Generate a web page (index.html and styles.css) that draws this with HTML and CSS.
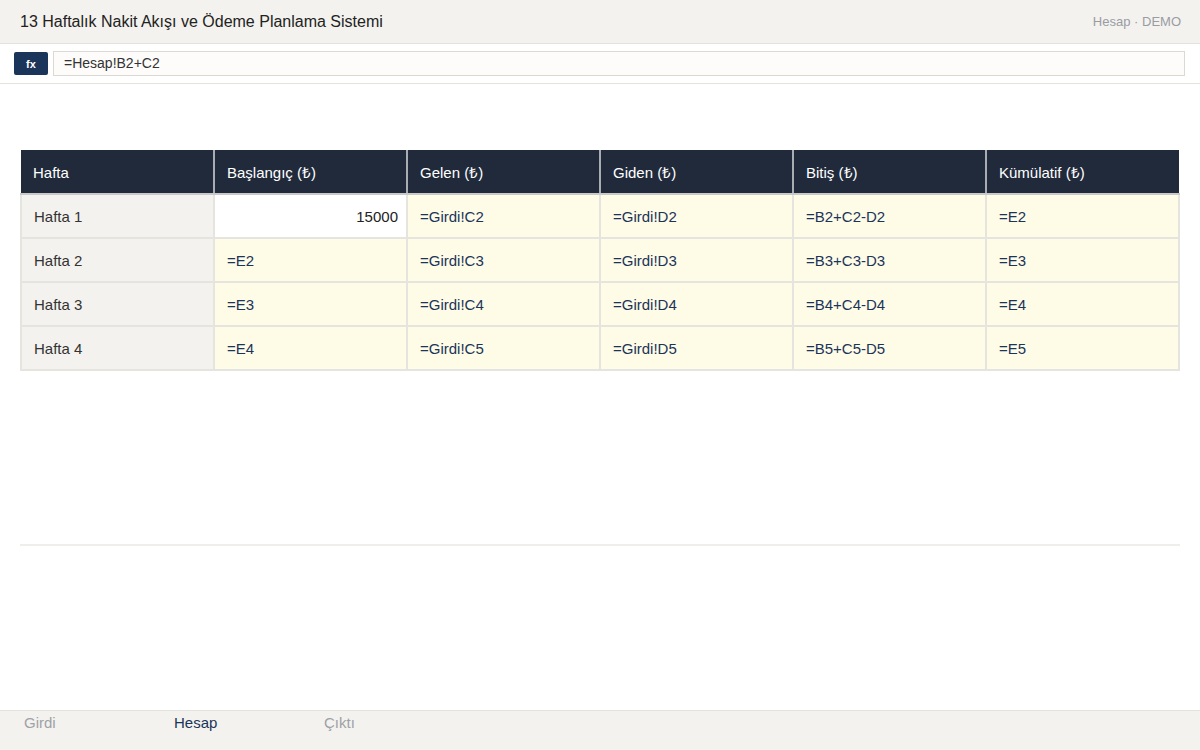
FILE: index.html
```html
<!DOCTYPE html>
<html lang="tr">

<head>
    <meta charset="UTF-8">
    <meta name="viewport" content="width=device-width, initial-scale=1.0">
    <title>13 Haftalık Nakit Akışı ve Ödeme Planlama Sistemi</title>
    <link rel="stylesheet" href="styles.css">
</head>

<body>
    <div class="app">
        <!-- üst başlık -->
        <div class="topbar">
            <div class="title">13 Haftalık Nakit Akışı ve Ödeme Planlama Sistemi</div>
            <div class="meta">Hesap · DEMO</div>
        </div>
        <!-- formül çubuğu -->
        <div class="formula">
            <span class="fx">fx</span>
            <div class="formula-input">=Hesap!B2+C2</div>
        </div>

        <div class="sheet">
            <table class="grid">
                <thead>
                    <tr>
                        <th>Hafta</th>
                        <th>Başlangıç (₺)</th>
                        <th>Gelen (₺)</th>
                        <th>Giden (₺)</th>
                        <th>Bitiş (₺)</th>
                        <th>Kümülatif (₺)</th>
                    </tr>
                </thead>
                <tbody>
                    <tr>
                        <td class="label">Hafta 1</td>
                        <td class="value">15000</td>
                        <td class="calc">=Girdi!C2</td>
                        <td class="calc">=Girdi!D2</td>
                        <td class="calc">=B2+C2-D2</td>
                        <td class="calc">=E2</td>
                    </tr>
                    <tr>
                        <td class="label">Hafta 2</td>
                        <td class="calc">=E2</td>
                        <td class="calc">=Girdi!C3</td>
                        <td class="calc">=Girdi!D3</td>
                        <td class="calc">=B3+C3-D3</td>
                        <td class="calc">=E3</td>
                    </tr>
                    <tr>
                        <td class="label">Hafta 3</td>
                        <td class="calc">=E3</td>
                        <td class="calc">=Girdi!C4</td>
                        <td class="calc">=Girdi!D4</td>
                        <td class="calc">=B4+C4-D4</td>
                        <td class="calc">=E4</td>
                    </tr>
                    <tr>
                        <td class="label">Hafta 4</td>
                        <td class="calc">=E4</td>
                        <td class="calc">=Girdi!C5</td>
                        <td class="calc">=Girdi!D5</td>
                        <td class="calc">=B5+C5-D5</td>
                        <td class="calc">=E5</td>
                    </tr>
                </tbody>
            </table>
            <div class="divider"></div>
        </div>

        <!-- sayfa sekmeleri -->
        <div class="tabs">
            <span class="tab">Girdi</span>
            <span class="tab active">Hesap</span>
            <span class="tab">Çıktı</span>
        </div>
    </div>
</body>

</html>
```

FILE: styles.css
```css
* {
    box-sizing: border-box;
}

body {
    margin: 0;
    font-family: "Liberation Sans", Arial, sans-serif;
    color: #222;
    background: #fff;
}

.app {
    width: 1200px;
    height: 750px;
    display: flex;
    flex-direction: column;
}

.topbar {
    height: 44px;
    background: #f3f2ee;
    border-bottom: 1px solid #e4e2dc;
    display: flex;
    align-items: center;
    justify-content: space-between;
    padding: 0 19px 0 20px;
}

.title {
    font-size: 16px;
    color: #222;
}

.meta {
    font-size: 13px;
    color: #9a9ca4;
}

.formula {
    height: 40px;
    border-bottom: 1px solid #e4e2dc;
    display: flex;
    align-items: center;
    gap: 5px;
    padding: 0 15px 0 14px;
}

.fx {
    width: 34px;
    height: 23px;
    background: #1b3459;
    color: #fff;
    border-radius: 2px;
    font-size: 11px;
    font-weight: bold;
    display: flex;
    align-items: center;
    justify-content: center;
}

.formula-input {
    flex: 1;
    height: 25px;
    background: #fdfcfa;
    border: 1px solid #dcd9d2;
    font-size: 14px;
    color: #333;
    padding: 0 10px;
    line-height: 23px;
}

.sheet {
    flex: 1;
    padding: 66px 20px 0;
}

.grid {
    width: 1160px;
    border-collapse: collapse;
    table-layout: fixed;
    font-size: 15px;
}

.grid th {
    height: 44px;
    background: #202a3a;
    color: #fff;
    font-weight: normal;
    text-align: left;
    padding: 1px 12px 0;
    border-left: 2px solid #a9acb2;
    border-bottom: 2px solid #c9c9c9;
}

.grid th:first-child {
    border-left: 0;
}

.grid td {
    height: 44px;
    padding: 0 12px;
    border: 2px solid #e6e4de;
}

.grid .label {
    background: #f3f2ee;
    color: #333;
}

.grid .value {
    background: #fff;
    text-align: right;
    color: #222;
    padding-right: 8px;
}

.grid .calc {
    background: #fefbe7;
    color: #1b3459;
}

.divider {
    height: 2px;
    background: #efeeea;
    margin-top: 173px;
}

.tabs {
    height: 40px;
    background: #f3f2ee;
    border-top: 1px solid #e4e2dc;
    display: flex;
    padding-left: 24px;
}

.tab {
    width: 150px;
    font-size: 15px;
    color: #9ea1a8;
    padding-top: 3px;
}

.tab.active {
    color: #1b3459;
}
```
